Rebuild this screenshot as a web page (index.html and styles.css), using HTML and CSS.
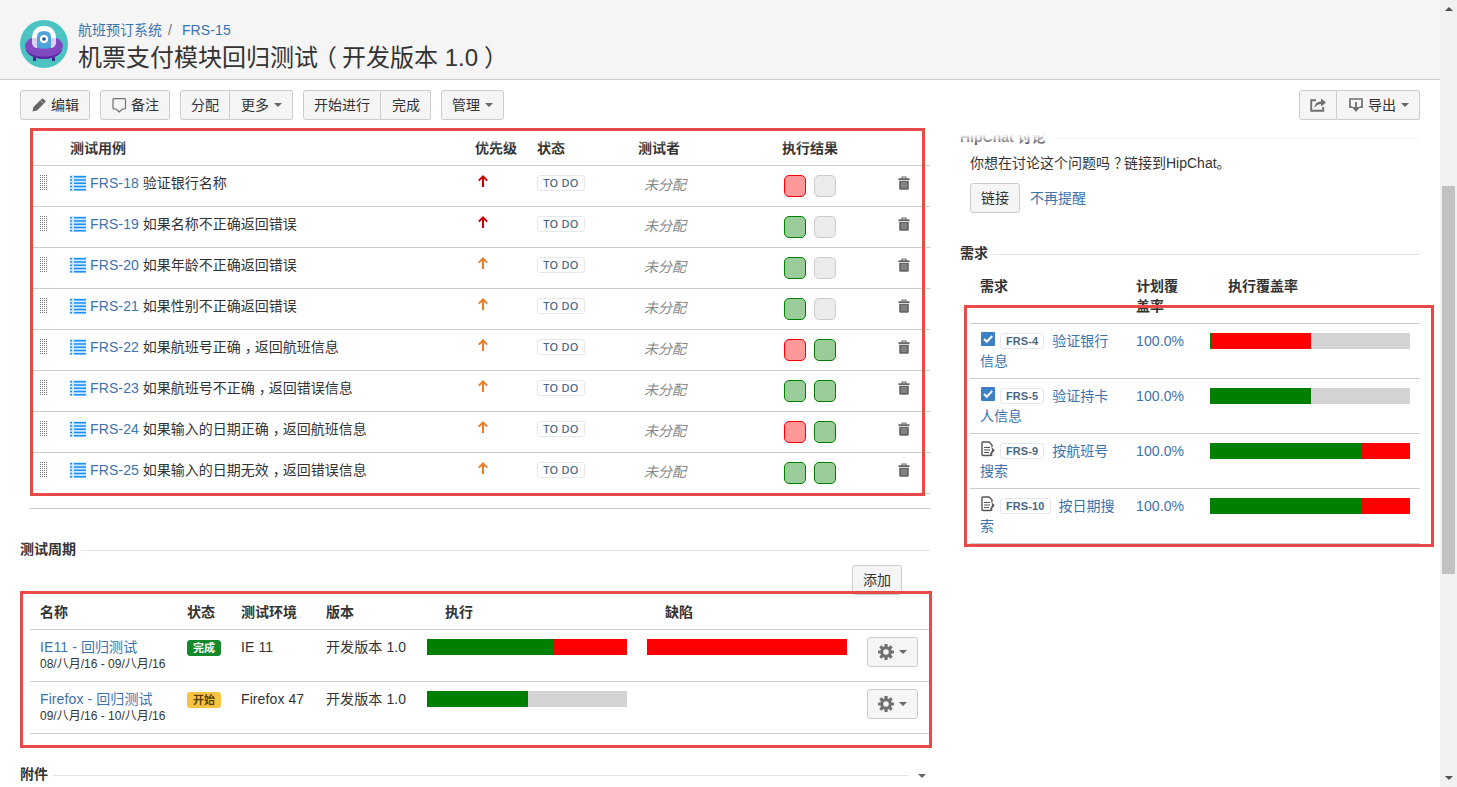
FILE: index.html
```html
<!DOCTYPE html>
<html lang="zh-CN">
<head>
    <meta charset="UTF-8">
    <meta name="viewport" content="width=device-width, initial-scale=1.0">
    <title>FRS-15 机票支付模块回归测试</title>
    <link rel="stylesheet" href="styles.css">
</head>
<body>
    <!-- Icon definitions -->
    <svg class="icon-defs" width="0" height="0">
        <symbol id="icon-list" viewBox="0 0 16 16">
            <rect width="16" height="16" fill="#cfe9ff"/>
            <path d="M0 1h2v1.5H0zM4 1h12v1.5H4zM0 4.200h2v1.500H0zM4 4.200h12v1.500H4zM0 7.500h2V9H0zM4 7.500h12V9H4zM0 10.700h2v1.500H0zM4 10.700h12v1.500H4zM0 14h2v1.500H0zM4 14h12v1.500H4z" fill="#1a8fff"/>
        </symbol>
        <symbol id="icon-up" viewBox="0 0 10 12">
            <path d="M5 12V1.6M.8 5.600L5 1.400l4.200 4.200" fill="none" stroke="currentColor" stroke-width="2"/>
        </symbol>
        <symbol id="icon-trash" viewBox="0 0 12 14">
            <path d="M.5 2.2h3V.5h5v1.7h3v2H.5zM4.6 1.5v.8h2.8v-.8z" fill="#666" fill-rule="evenodd"/>
            <path d="M1.2 5h9.6v7.6q0 1.2-1.2 1.2H2.4q-1.2 0-1.2-1.2z" fill="#666"/>
            <path d="M4 6v6M6 6v6M8 6v6" stroke="#a5a5a5" stroke-width=".9"/>
        </symbol>
        <symbol id="icon-gear" viewBox="0 0 16 16">
            <g fill="#707070">
                <rect x="6.4" y="0" width="3.2" height="16" rx=".5"/>
                <rect x="6.4" y="0" width="3.2" height="16" rx=".5" transform="rotate(45 8 8)"/>
                <rect x="6.4" y="0" width="3.2" height="16" rx=".5" transform="rotate(90 8 8)"/>
                <rect x="6.4" y="0" width="3.2" height="16" rx=".5" transform="rotate(135 8 8)"/>
                <circle cx="8" cy="8" r="5.8"/>
            </g>
            <circle cx="8" cy="8" r="2.800" fill="#f5f5f5"/>
        </symbol>
        <symbol id="icon-check" viewBox="0 0 14 14">
            <rect width="14" height="14" rx="1" fill="#3b7fc4"/>
            <path d="M3 7l2.8 2.8L11.2 4" fill="none" stroke="#fff" stroke-width="2"/>
        </symbol>
        <symbol id="icon-doc" viewBox="0 0 14 16">
            <path d="M11 6V4L8 1H2Q1 1 1 2v11.500q0 1 1 1h7.500q1.500 0 1.500-1.500" fill="none" stroke="#555" stroke-width="1.400"/>
            <path d="M3 6.500h6M3 9h6M3 11.500h5" fill="none" stroke="#555" stroke-width="1.200"/>
            <path d="M10.500 6l3.200 3.200-3.400 4.300-1.300.3.300-1.500 1.700-2.800z" fill="#555"/>
        </symbol>
    </svg>

    <div class="window">
        <div class="page">
            <header class="issue-header">
                <svg class="avatar" viewBox="0 0 48 48">
                    <circle cx="24" cy="24" r="24" fill="#4bc3c3"/>
                    <path d="M13 34h3v7h-3zM32 34h3v7h-3z" fill="#4a2396"/>
                    <ellipse cx="24" cy="28.500" rx="18" ry="10.500" fill="#5a2ba6"/>
                    <ellipse cx="24" cy="26" rx="19" ry="10.500" fill="#8149c0"/>
                    <path d="M12 24V18Q13 6 24 6t12 12v6q-1 3-4 4H16q-3-1-4-4z" fill="#d9cff0"/>
                    <path d="M12 18Q13 6 24 6t12 12z" fill="#fff"/>
                    <path d="M17 28V17q0-6 7-6t7 6v11q-7 1.500-14 0z" fill="#4fa3dc"/>
                    <circle cx="24" cy="19" r="4" fill="#fff"/>
                    <circle cx="24" cy="19" r="1.800" fill="#1f4e8c"/>
                </svg>
                <div class="issue-title">
                    <div class="breadcrumb"><a>航班预订系统</a><span class="slash">/</span><a class="key">FRS-15</a></div>
                    <h1>机票支付模块回归测试<span class="paren-open">（</span>开发版本 1.0<span class="paren-close">）</span></h1>
                </div>
            </header>

            <div class="toolbar">
                <div class="button-group">
                    <button class="btn">
                        <svg class="btn-icon" viewBox="0 0 16 16"><path d="M1.500 14.500l1-4.500L10.500 2q1-1 2 0l1.500 1.500q1 1 0 2L6 13.500z" fill="#666"/><path d="M9.500 3.500l3 3" stroke="#f5f5f5" stroke-width=".6"/></svg>编辑
                    </button>
                </div>
                <div class="button-group">
                    <button class="btn">
                        <svg class="btn-icon" viewBox="0 0 16 16"><path d="M3 1.700h10.500q1 0 1 1V11q0 1-1 1h-2L8.200 15 5 12H3q-1 0-1-1V2.700q0-1 1-1z" fill="none" stroke="#707070" stroke-width="1.200"/></svg>备注
                    </button>
                </div>
                <div class="button-group">
                    <button class="btn">分配</button>
                    <button class="btn">更多<span class="caret"></span></button>
                </div>
                <div class="button-group">
                    <button class="btn">开始进行</button>
                    <button class="btn">完成</button>
                </div>
                <div class="button-group">
                    <button class="btn">管理<span class="caret"></span></button>
                </div>
                <div class="button-group right">
                    <button class="btn">
                        <svg class="btn-icon share" viewBox="0 0 16 16"><path d="M6 3.200H1.200v10.600h12V10" fill="none" stroke="#707070" stroke-width="1.900"/><path d="M4.500 11Q4.500 4.500 11 4.500V1.500l5 4-5 4V7Q7 7 4.500 11z" fill="#707070"/></svg>
                    </button>
                    <button class="btn">
                        <svg class="btn-icon" viewBox="0 0 16 16"><path d="M4.500 10.200H2V2h12v8.200h-2.500" fill="none" stroke="#707070" stroke-width="1.700"/><path d="M7.100 5h1.800v5h3.300L8 15l-4.200-5h3.300z" fill="#707070"/></svg>导出<span class="caret"></span>
                    </button>
                </div>
            </div>

            <div class="content">
                <main class="main-column">
                    <!-- Test cases -->
                    <section class="cases">
                        <table class="grid-table case-table">
                            <colgroup>
                                <col class="w-handle"><col class="w-case"><col class="w-priority"><col class="w-status"><col class="w-tester"><col class="w-result"><col class="w-delete">
                            </colgroup>
                            <thead>
                                <tr><th></th><th>测试用例</th><th>优先级</th><th>状态</th><th>测试者</th><th>执行结果</th><th></th></tr>
                            </thead>
                            <tbody id="caseRows"></tbody>
                        </table>
                    </section>

                    <!-- Test cycles -->
                    <h2 class="section-title">测试周期</h2>
                    <div class="cycle-actions"><button class="btn">添加</button></div>
                    <section class="cycles">
                        <table class="grid-table cycle-table">
                            <colgroup>
                                <col class="w-name"><col class="w-state"><col class="w-env"><col class="w-version"><col class="w-bar"><col class="w-bar"><col>
                            </colgroup>
                            <thead>
                                <tr><th>名称</th><th>状态</th><th>测试环境</th><th>版本</th><th class="indent">执行</th><th class="indent">缺陷</th><th></th></tr>
                            </thead>
                            <tbody>
                                <tr>
                                    <td><a>IE11 - 回归测试</a><div class="dates">08/八月/16 - 09/八月/16</div></td>
                                    <td><span class="badge done">完成</span></td>
                                    <td>IE 11</td>
                                    <td>开发版本 1.0</td>
                                    <td><div class="bar"><i class="pass" style="width: 63.5%"></i><i class="fail" style="width: 36.5%"></i></div></td>
                                    <td><div class="bar"><i class="pass" style="width: 0.5%"></i><i class="fail" style="width: 99.5%"></i></div></td>
                                    <td><button class="btn gear"><svg class="btn-icon"><use href="#icon-gear"/></svg><span class="caret"></span></button></td>
                                </tr>
                                <tr>
                                    <td><a>Firefox - 回归测试</a><div class="dates">09/八月/16 - 10/八月/16</div></td>
                                    <td><span class="badge started">开始</span></td>
                                    <td>Firefox 47</td>
                                    <td>开发版本 1.0</td>
                                    <td><div class="bar"><i class="pass" style="width: 50.5%"></i></div></td>
                                    <td></td>
                                    <td><button class="btn gear"><svg class="btn-icon"><use href="#icon-gear"/></svg><span class="caret"></span></button></td>
                                </tr>
                            </tbody>
                        </table>
                    </section>

                    <h2 class="section-title attachments">附件<span class="caret"></span></h2>
                </main>

                <aside class="side-column">
                    <h2 class="section-title chat-title">HipChat 讨论</h2>
                    <div class="chat">
                        <p>你想在讨论这个问题吗<span class="punct">？</span>链接到HipChat。</p>
                        <div class="chat-actions"><button class="btn">链接</button><a>不再提醒</a></div>
                    </div>

                    <h2 class="section-title">需求</h2>
                    <section class="requirements">
                        <table class="grid-table requirement-table">
                            <colgroup><col class="w-req"><col class="w-plan"><col></colgroup>
                            <thead>
                                <tr><th>需求</th><th>计划覆盖率</th><th class="indent">执行覆盖率</th></tr>
                            </thead>
                            <tbody id="requirementRows"></tbody>
                        </table>
                    </section>
                </aside>
            </div>
        </div>

        <div class="scrollbar">
            <span class="arrow up"></span>
            <span class="thumb"></span>
            <span class="arrow down"></span>
        </div>
    </div>

    <script src="script.js"></script>
</body>
</html>
```
FILE: styles.css
```css
:root {
    --link-color: #3b73af;
    --text-color: #333;
    --border-color: #ccc;
    --frame-color: #ea4a46;
}

*,
*::before,
*::after {
    box-sizing: border-box;
}

body {
    margin: 0;
    overflow: hidden;
    font-family: "Liberation Sans", Arial, "Noto Sans CJK SC", sans-serif;
    font-size: 14px;
    line-height: 20px;
    color: var(--text-color);
    background: #fff;
}

.icon-defs {
    position: absolute;
}

.window {
    display: grid;
    grid-template-columns: 1fr 17px;
    height: 787px;
}

.page {
    height: 787px;
    overflow: hidden;
}

a {
    color: var(--link-color);
    text-decoration: none;
}

.key {
    letter-spacing: 0.12px;
}

/* move full-width punctuation to the middle of its cell */
.paren-open {
    margin: 0 5px 0 -5px;
}

.paren-close {
    margin-left: 6px;
}

.punct {
    padding-left: 4px;
    margin-right: -4px;
}

/* Header */
.issue-header {
    display: flex;
    gap: 10px;
    height: 80px;
    padding: 20px 20px 0;
    background: #f5f5f5;
    border-bottom: 1px solid var(--border-color);
}

.avatar {
    width: 48px;
    height: 48px;
}

.slash {
    margin: 0 10px 0 6px;
    color: #707070;
}

h1 {
    margin: 3px 0 0;
    font-size: 24px;
    font-weight: normal;
    line-height: 30px;
}

/* Toolbar */
.toolbar {
    position: relative;
    display: flex;
    gap: 10px;
    height: 50px;
    padding: 10px 20px;
}

/* scrolled content fades out below the toolbar */
.toolbar::after {
    content: "";
    position: absolute;
    top: 48px;
    left: 0;
    right: 0;
    height: 18px;
    background: linear-gradient(#fff 35%, rgba(255, 255, 255, 0));
    pointer-events: none;
    z-index: 1;
}

.button-group {
    display: flex;
}

.button-group.right {
    margin-left: auto;
}

.btn {
    display: inline-flex;
    align-items: center;
    height: 30px;
    padding: 0 10px;
    font: inherit;
    white-space: nowrap;
    color: var(--text-color);
    background: #f5f5f5;
    border: 1px solid var(--border-color);
    border-radius: 3px;
}

.btn:not(:first-child) {
    padding-left: 11px;
    border-left: none;
    border-top-left-radius: 0;
    border-bottom-left-radius: 0;
}

.btn:not(:last-child):not(.chat-actions .btn) {
    border-top-right-radius: 0;
    border-bottom-right-radius: 0;
}

.btn-icon {
    width: 16px;
    height: 16px;
    margin-right: 4px;
}

.btn-icon.share {
    margin-right: 0;
}

.caret {
    margin-left: 5px;
    border: 4px solid transparent;
    border-top-color: #666;
    border-bottom: none;
}

/* Columns */
.content {
    display: grid;
    grid-template-columns: 910px 460px;
    gap: 30px;
    padding-left: 20px;
}

.section-title {
    display: flex;
    align-items: center;
    gap: 5px;
    margin: 0;
    font-size: 14px;
    line-height: 20px;
}

.section-title::after {
    content: "";
    flex: 1;
    height: 1px;
    margin-top: 2px;
    background: #e2e2e2;
}

/* Tables */
.grid-table {
    table-layout: fixed;
    width: 100%;
    border-collapse: separate;
    border-spacing: 0;
}

.grid-table th,
.grid-table td {
    padding: 7px 10px 0;
    text-align: left;
    vertical-align: top;
    border-bottom: 1px solid var(--border-color);
}

.grid-table th.indent {
    padding-left: 28px;
}

/* Test cases */
.cases {
    position: relative;
    height: 379px;
    margin: 0 0 30px 10px;
    border-bottom: 1px solid var(--border-color);
}

/* highlight frames lie over the tables */
.cases::before,
.cycles::before,
.requirements::before {
    content: "";
    position: absolute;
    border: 3px solid var(--frame-color);
    pointer-events: none;
    z-index: 2;
}

.cases::before {
    top: -2px;
    left: 0;
    width: 895px;
    height: 368px;
}

.case-table th {
    height: 36px;
    padding-top: 8px;
}

.case-table td {
    height: 41px;
}

.w-handle { width: 30px; }
.w-case { width: 405px; }
.w-priority { width: 62px; }
.w-status { width: 101px; }
.w-tester { width: 144px; }
.w-result { width: 115px; }

.handle {
    width: 7px;
    height: 15px;
    margin-top: 2px;
    background:
        repeating-linear-gradient(transparent 0 1px, #fff 1px 2px),
        repeating-linear-gradient(90deg, #777 0 1px, #fff 1px 2px);
}

.icon-list {
    width: 16px;
    height: 16px;
    margin: 0 4px 0 0;
    vertical-align: -3px;
}

.icon-up {
    display: block;
    width: 10px;
    height: 12px;
    margin: 2px 0 0 3px;
}

.icon-up.critical { color: #c00; }
.icon-up.major { color: #ea7d24; }

.icon-trash {
    display: block;
    width: 12px;
    height: 14px;
    margin: 3px 0 0 1px;
}

.unassigned {
    padding: 2px 0 0 6px;
    font-style: italic;
    color: #888;
}

.badge {
    display: inline-block;
    height: 16px;
    padding: 0 5px;
    font-size: 11px;
    font-weight: bold;
    line-height: 14px;
    white-space: nowrap;
    vertical-align: 1px;
    color: #4a6785;
    border: 1px solid #e4e8ed;
    border-radius: 3px;
}

.case-table .badge {
    display: block;
    width: 48px;
    margin-top: 2px;
    padding: 0;
    font-family: "Noto Sans", sans-serif;
    font-weight: 500;
    letter-spacing: 0.3px;
    text-align: center;
}

.cycle-table .badge {
    display: block;
    width: 34px;
    margin-top: 3px;
}

.badge.done {
    color: #fff;
    background: #14892c;
    border-color: #14892c;
}

.badge.started {
    color: #594300;
    background: #f6c342;
    border-color: #f6c342;
}

.results {
    display: flex;
    gap: 8px;
    margin: 2px 0 0 2px;
}

.results i {
    width: 22px;
    height: 22px;
    border: 1px solid var(--border-color);
    border-radius: 5px;
    background: #ebebeb;
}

.results .pass {
    background: #99cc99;
    border-color: green;
}

.results .fail {
    background: #ff9999;
    border-color: red;
}

/* Test cycles */
.cycle-actions {
    display: flex;
    justify-content: flex-end;
    height: 35px;
    margin-top: 6px;
    padding-right: 28px;
}

.cycles {
    position: relative;
    margin-left: 10px;
}

.cycles::before {
    top: -9px;
    left: -10px;
    width: 912px;
    height: 157px;
}

.cycle-table th {
    height: 30px;
    padding-top: 2px;
}

.cycle-table td {
    height: 52px;
    letter-spacing: 0.1px;
}

.w-name { width: 147px; }
.w-state { width: 54px; }
.w-env { width: 85px; }
.w-version { width: 101px; }
.w-bar { width: 220px; }

.cycle-table td:first-child {
    white-space: nowrap;
}

.dates {
    font-size: 12px;
    line-height: 15px;
    letter-spacing: 0;
}

.btn.gear .btn-icon {
    margin-right: 0;
}

.bar {
    display: flex;
    height: 16px;
    margin-top: 2px;
    background: #d3d3d3;
}

.bar .pass { background: green; }
.bar .fail { background: red; }

.attachments {
    margin-top: 30px;
    padding-right: 4px;
}

.attachments::after {
    order: 1;
}

.attachments .caret {
    order: 2;
    margin-top: 3px;
}

/* Side column */
.chat-title {
    margin-top: -3px;
}

.chat {
    padding: 6px 10px 0;
    margin-bottom: 30px;
}

.chat p {
    margin: 0 0 10px;
}

.chat-actions {
    display: flex;
    align-items: center;
    gap: 10px;
}

.requirements {
    position: relative;
    margin-left: 10px;
}

.requirements::before {
    top: 42px;
    left: -6px;
    width: 470px;
    height: 242px;
}

.w-req { width: 156px; }
.w-plan { width: 74px; }

.requirement-table th {
    height: 61px;
    padding-top: 13px;
}

.requirement-table td {
    height: 55px;
}

.requirement-table .plan {
    color: var(--link-color);
    letter-spacing: 0.1px;
}

.requirement-table .badge {
    margin: 0 8px 0 5px;
    letter-spacing: 0.1px;
}

.icon-type {
    width: 14px;
    height: 16px;
    margin-left: 1px;
    vertical-align: -1px;
}

/* Scrollbar */
.scrollbar {
    display: flex;
    flex-direction: column;
    align-items: center;
    background: #f1f1f1;
}

.thumb {
    width: 13px;
    height: 388px;
    margin: 175px 0 auto;
    background: #c1c1c1;
}

.arrow {
    border: 4px solid transparent;
}

.arrow.up {
    margin-top: 7px;
    border-top: none;
    border-bottom-color: #505050;
}

.arrow.down {
    margin-bottom: 7px;
    border-bottom: none;
    border-top-color: #505050;
}
```
FILE: script.js
```js
const cases = [
    { key: 'FRS-18', name: '验证银行名称', priority: 'critical', results: ['fail', 'none'] },
    { key: 'FRS-19', name: '如果名称不正确返回错误', priority: 'critical', results: ['pass', 'none'] },
    { key: 'FRS-20', name: '如果年龄不正确返回错误', priority: 'major', results: ['pass', 'none'] },
    { key: 'FRS-21', name: '如果性别不正确返回错误', priority: 'major', results: ['pass', 'none'] },
    { key: 'FRS-22', name: '如果航班号正确，返回航班信息', priority: 'major', results: ['fail', 'pass'] },
    { key: 'FRS-23', name: '如果航班号不正确，返回错误信息', priority: 'major', results: ['pass', 'pass'] },
    { key: 'FRS-24', name: '如果输入的日期正确，返回航班信息', priority: 'major', results: ['fail', 'pass'] },
    { key: 'FRS-25', name: '如果输入的日期无效，返回错误信息', priority: 'major', results: ['pass', 'pass'] }
];

const requirements = [
    { key: 'FRS-4', name: '验证银行信息', icon: 'check', pass: 0.5, fail: 50 },
    { key: 'FRS-5', name: '验证持卡人信息', icon: 'check', pass: 50.5, fail: 0 },
    { key: 'FRS-9', name: '按航班号搜索', icon: 'doc', pass: 75.5, fail: 24.5 },
    { key: 'FRS-10', name: '按日期搜索', icon: 'doc', pass: 75.5, fail: 24.5 }
];

document.getElementById('caseRows').innerHTML = cases.map(c => `
    <tr>
        <td><div class="handle"></div></td>
        <td><svg class="icon-list"><use href="#icon-list"/></svg><a class="key">${c.key}</a> ${c.name.replace('，', '<span class="punct">，</span>')}</td>
        <td><svg class="icon-up ${c.priority}"><use href="#icon-up"/></svg></td>
        <td><span class="badge">TO DO</span></td>
        <td><div class="unassigned">未分配</div></td>
        <td><div class="results">${c.results.map(r => `<i class="${r}"></i>`).join('')}</div></td>
        <td><svg class="icon-trash"><use href="#icon-trash"/></svg></td>
    </tr>`).join('');

document.getElementById('requirementRows').innerHTML = requirements.map(r => `
    <tr>
        <td><svg class="icon-type"><use href="#icon-${r.icon}"/></svg><span class="badge">${r.key}</span><a>${r.name}</a></td>
        <td class="plan">100.0%</td>
        <td><div class="bar"><i class="pass" style="width: ${r.pass}%"></i><i class="fail" style="width: ${r.fail}%"></i></div></td>
    </tr>`).join('');
```
